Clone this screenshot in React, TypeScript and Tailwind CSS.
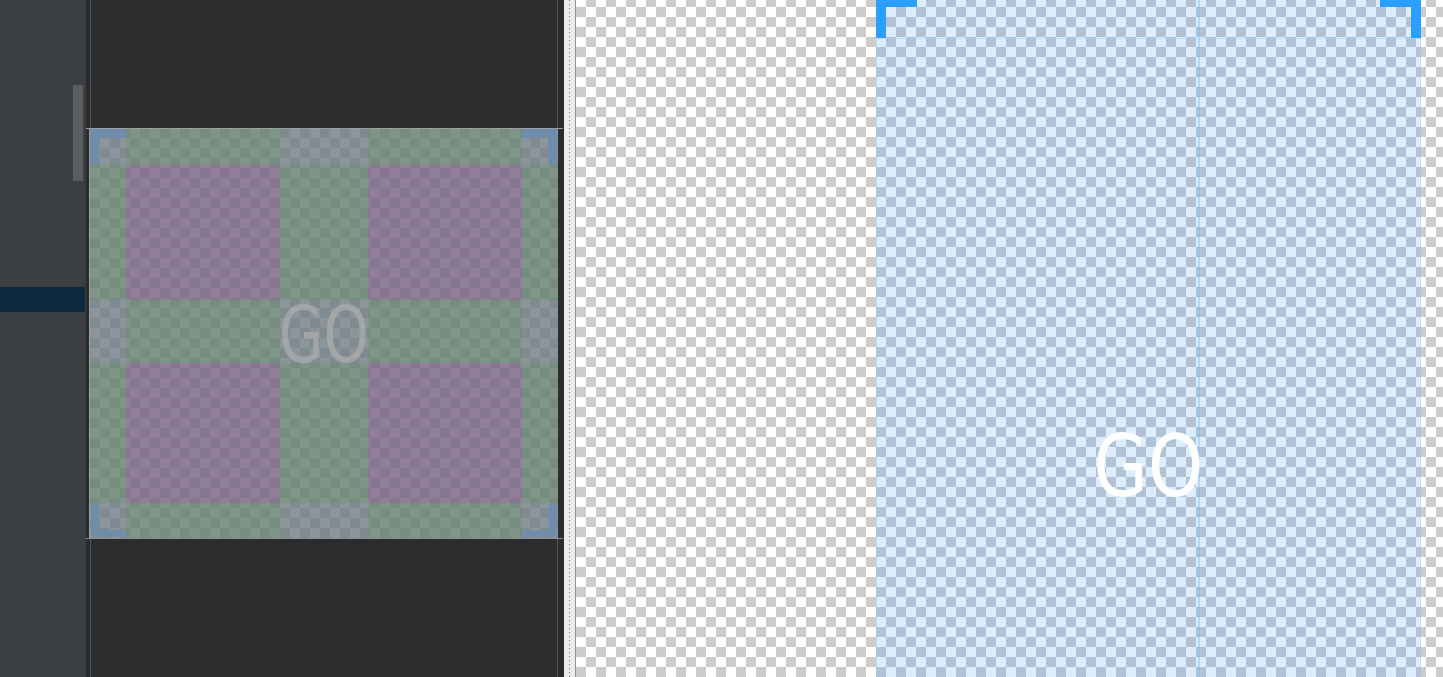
import React from "react";

const G = "bg-[image:repeating-conic-gradient(#7f8b91_0_25%,#8b959b_0_50%)] bg-[length:20px_20px] bg-[position:0px_-2px] bg-fixed";
const N = "bg-[image:repeating-conic-gradient(#768c7e_0_25%,#7f9588_0_50%)] bg-[length:20px_20px] bg-[position:0px_-2px] bg-fixed";
const P = "bg-[image:repeating-conic-gradient(#87768f_0_25%,#917f99_0_50%)] bg-[length:20px_20px] bg-[position:0px_-2px] bg-fixed";

const FONT = "font-['DejaVu_Sans',sans-serif]";

function MidImage() {
  return (
    <div className="grid grid-cols-[36px_154px_88px_154px_36px] grid-rows-[36px_135px_63px_140px_35px] w-[469px] h-[409px] border-l border-[#9b9d9f]">
      <div className={G}>
        <div className="w-[36px] h-[35px] border-t-[9px] border-l-[9px] border-[#6f8dab]" />
      </div>
      <div className={N} />
      <div className={G} />
      <div className={N} />
      <div className={G}>
        <div className="w-[35px] h-[35px] border-t-[9px] border-r-[9px] border-[#6f8dab]" />
      </div>

      <div className={N} />
      <div className={P} />
      <div className={N} />
      <div className={P} />
      <div className={N} />

      <div className={G} />
      <div className={N} />
      <div className={`${G} flex items-center justify-center pt-[6px]`}>
        <span className={`shrink-0 text-[78px] leading-none text-[rgba(172,172,172,0.75)] scale-x-[0.74] ${FONT}`}>GO</span>
      </div>
      <div className={N} />
      <div className={G} />

      <div className={N} />
      <div className={P} />
      <div className={N} />
      <div className={P} />
      <div className={N} />

      <div className={G}>
        <div className="mt-[1px] ml-[1px] w-[35px] h-[33px] border-b-[7px] border-l-[8px] border-[#6f8dab]" />
      </div>
      <div className={N} />
      <div className={G} />
      <div className={N} />
      <div className={G}>
        <div className="mt-[1px] w-[35px] h-[33px] border-b-[7px] border-r-[8px] border-[#6f8dab]" />
      </div>
    </div>
  );
}

export default function App() {
  return (
    <div className="flex w-[1443px] h-[677px] overflow-hidden bg-[#2b2c2e]">
      {/* left panel */}
      <div className="relative w-[86px] shrink-0 h-full bg-[#3c3f41] pt-[287px]">
        <div className="h-[25px] w-[85px] bg-[#0d293e]" />
        <div className="absolute left-[73px] top-[85px] w-[10px] h-[96px] bg-[#5b5d5f]" />
      </div>

      {/* middle panel */}
      <div className="w-[478px] shrink-0 h-full bg-[#2b2c2e] flex flex-col">
        <div className="h-[129px] mr-[1px] border-b border-[#9b9d9f]">
          <div className="h-full ml-[4px] mr-[5px] border-x border-[#535557]" />
        </div>
        <div className="flex">
          <div className="w-[3px]" />
          <MidImage />
        </div>
        <div className="flex-1 mr-[1px] border-t border-[#8a8c8e]">
          <div className="h-full ml-[4px] mr-[5px] border-x border-[#535557]" />
        </div>
      </div>

      {/* ruler */}
      <div className="w-[11px] shrink-0 h-full bg-[#ececec] flex justify-center">
        <div className="w-px h-full bg-[image:repeating-linear-gradient(to_bottom,#6d6d6d_0_1px,transparent_1px_4px)]" />
      </div>
      <div className="w-px shrink-0 h-full bg-[#8797a6]" />

      {/* right canvas */}
      <div className="flex-1 h-full bg-[image:repeating-conic-gradient(#cccccc_0_25%,#ffffff_0_50%)] bg-[length:20px_20px] bg-[position:0px_-3px]">
        <div className="relative ml-[300px] w-[545px] h-full bg-[rgba(30,140,255,0.16)] border-x border-[rgba(150,205,255,0.6)] flex flex-col">
          <div className="-mt-[3px] -mx-px h-[42px] flex justify-between border-b border-[rgba(160,210,255,0.6)]">
            <div className="w-[41px] h-[41px] border-t-[10px] border-l-[10px] border-[#2b9fff]" />
            <div className="w-[41px] h-[41px] border-t-[10px] border-r-[10px] border-[#2b9fff]" />
          </div>
          <div className="absolute left-[321px] top-0 bottom-0 w-[2px] bg-[rgba(120,190,255,0.45)]" />
          <div className="pt-[385px] flex justify-center">
            <span className={`text-[85px] leading-none text-white scale-x-[0.83] ${FONT}`}>GO</span>
          </div>
        </div>
      </div>
    </div>
  );
}
